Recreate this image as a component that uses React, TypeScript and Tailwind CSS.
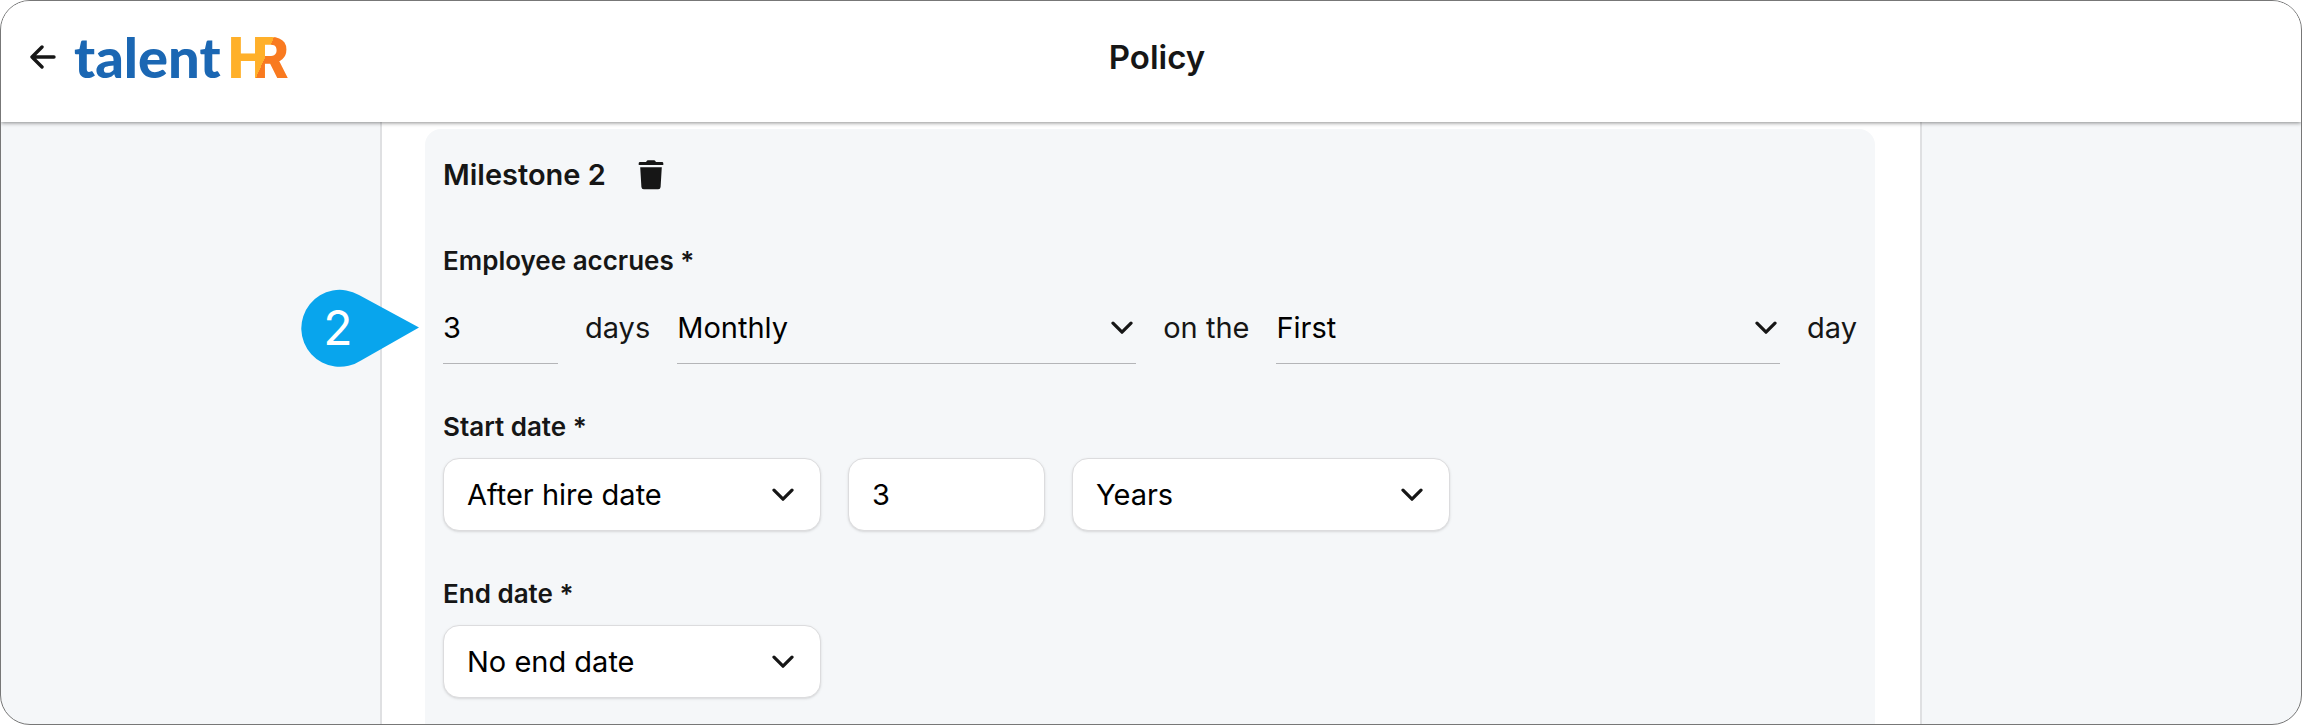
import { useState } from "react";
import type { SelectHTMLAttributes } from "react";

type Variant = "line" | "box";

function Chevron({ className }: { className: string }) {
  return (
    <svg viewBox="0 0 22 14" fill="none" aria-hidden className={`pointer-events-none absolute top-1/2 h-[14px] w-[22px] ${className}`}>
      <path d="M2 2.2 11 11.2 20 2.2" stroke="#161616" strokeWidth="3.2" strokeLinecap="round" strokeLinejoin="round" />
    </svg>
  );
}

const lineField = "h-[72px] w-full appearance-none border-b border-[#b4b5b8] bg-transparent text-[29px] text-black outline-none";
const boxField =
  "h-[73px] w-full appearance-none rounded-2xl border border-[#dcdcde] bg-white px-[23px] text-[29px] text-black shadow-sm outline-none";

function Select({
  variant,
  options,
  className,
  ...rest
}: { variant: Variant; options: string[]; className: string } & SelectHTMLAttributes<HTMLSelectElement>) {
  return (
    <div className={`relative ${className}`}>
      <select {...rest} className={variant === "line" ? lineField : boxField}>
        {options.map((o) => (
          <option key={o}>{o}</option>
        ))}
      </select>
      <Chevron className={variant === "line" ? "right-[3px] -translate-y-1/2" : "right-[27px] -translate-y-1/2"} />
    </div>
  );
}

function Logo() {
  return (
    <svg viewBox="0 0 224 72" role="img" aria-label="talentHR" className="h-[72px] w-[224px]">
      <defs>
        <linearGradient id="logo-r" gradientUnits="userSpaceOnUse" x1="176" y1="24" x2="212" y2="40">
          <stop offset="50%" stopColor="#ffb02a" />
          <stop offset="50%" stopColor="#f97a20" />
        </linearGradient>
      </defs>
      <text x="1" y="57" fill="#1b67b3" fontFamily="Lato, sans-serif" fontWeight="900" fontSize="56">
        talent
      </text>
      <g fontFamily="Roboto, sans-serif" fontWeight="900" fontSize="57">
        <text x="155" y="57" fill="#ffb02a">
          H
        </text>
        <text x="179" y="57" fill="url(#logo-r)">
          R
        </text>
      </g>
    </svg>
  );
}

// numbered callout pointing at the accrual row
function StepMarker({ step }: { step: number }) {
  return (
    <div className="absolute top-1/2 right-full mr-6 h-[78px] w-[118px] -translate-y-1/2">
      <svg viewBox="0 0 118 78" aria-hidden className="absolute inset-0 h-full w-full">
        <path d="M118 38.5 60 71.5A38.5 38.5 0 1 1 58 6Z" fill="#08a5ed" />
      </svg>
      <span className="relative flex h-full w-[74px] items-center justify-center text-[48px] text-white">{step}</span>
    </div>
  );
}

const labelCls = "mb-[15px] block text-[26px] leading-8 font-semibold";

export default function App() {
  const [amount, setAmount] = useState("3");
  const [offset, setOffset] = useState("3");

  return (
    <div className="flex min-h-screen flex-col overflow-hidden rounded-[30px] border border-[#777] bg-[#f5f7f9] font-['Inter',sans-serif] text-[#161616]">
      <header className="z-10 grid h-[121px] shrink-0 grid-cols-[1fr_auto_1fr] items-start bg-white pt-5 pr-4 pl-7 shadow-[0_1px_4px_rgba(0,0,0,0.45)]">
        <div className="flex items-center gap-4">
          <button type="button" aria-label="Back" className="flex h-[72px] w-7 items-center justify-center">
            <svg viewBox="0 0 28 24" fill="none" aria-hidden className="h-6 w-7">
              <path
                d="M25 12H3M13 2 3 12l10 10"
                stroke="#161616"
                strokeWidth="3.4"
                strokeLinecap="round"
                strokeLinejoin="round"
              />
            </svg>
          </button>
          <a href="#">
            <Logo />
          </a>
        </div>
        <h1 className="text-[33px] leading-[72px] font-semibold">Policy</h1>
      </header>

      <main className="mx-auto flex w-full max-w-[1542px] flex-1 flex-col border-x-2 border-[#dfe0e2] bg-white pt-[7px] pr-[45px] pl-[43px]">
        <section className="flex-1 rounded-t-2xl bg-[#f5f7f9] px-[18px] pt-[26px] pb-5">
          <div className="flex items-center gap-8">
            <h2 className="text-[29px] leading-10 font-semibold">Milestone 2</h2>
            <button type="button" aria-label="Delete milestone">
              <svg viewBox="0 0 26 30" aria-hidden className="h-[30px] w-[26px]">
                <path
                  d="M8.500 1.200Q9 .3 10 .3h6q1 0 1.500.9l.4.8H24a1.300 1.300 0 0 1 1.300 1.300V5H.7V3.300A1.300 1.300 0 0 1 2 2h6.100ZM2.200 7.200h21.600L22.600 27q-.2 2.300-2.400 2.300H5.800Q3.600 29.300 3.400 27Z"
                  fill="#161616"
                />
              </svg>
            </button>
          </div>

          <form className="mt-[50px] flex flex-col gap-[47px]">
            <div>
              <label htmlFor="accrues" className={labelCls}>
                Employee accrues *
              </label>
              <div className="relative flex items-center gap-[27px] text-[29px]">
                <StepMarker step={2} />
                <div className="w-[115px] shrink-0">
                  <input id="accrues" value={amount} onChange={(e) => setAmount(e.target.value)} className={lineField} />
                </div>
                <span>days</span>
                <Select variant="line" aria-label="Accrual frequency" options={["Monthly", "Yearly"]} className="w-[459px]" />
                <span className="whitespace-nowrap">on the</span>
                <Select variant="line" aria-label="Accrual day" options={["First", "Last"]} className="flex-1" />
                <span>day</span>
              </div>
            </div>

            <div>
              <label htmlFor="start" className={labelCls}>
                Start date *
              </label>
              <div className="flex gap-[27px]">
                <Select id="start" variant="box" options={["After hire date", "On hire date"]} className="w-[378px]" />
                <div className="w-[197px]">
                  <input aria-label="Start offset" value={offset} onChange={(e) => setOffset(e.target.value)} className={boxField} />
                </div>
                <Select variant="box" aria-label="Start offset unit" options={["Years", "Months"]} className="w-[378px]" />
              </div>
            </div>

            <div>
              <label htmlFor="end" className={labelCls}>
                End date *
              </label>
              <Select id="end" variant="box" options={["No end date", "After hire date"]} className="w-[378px]" />
            </div>
          </form>
        </section>
      </main>
    </div>
  );
}
